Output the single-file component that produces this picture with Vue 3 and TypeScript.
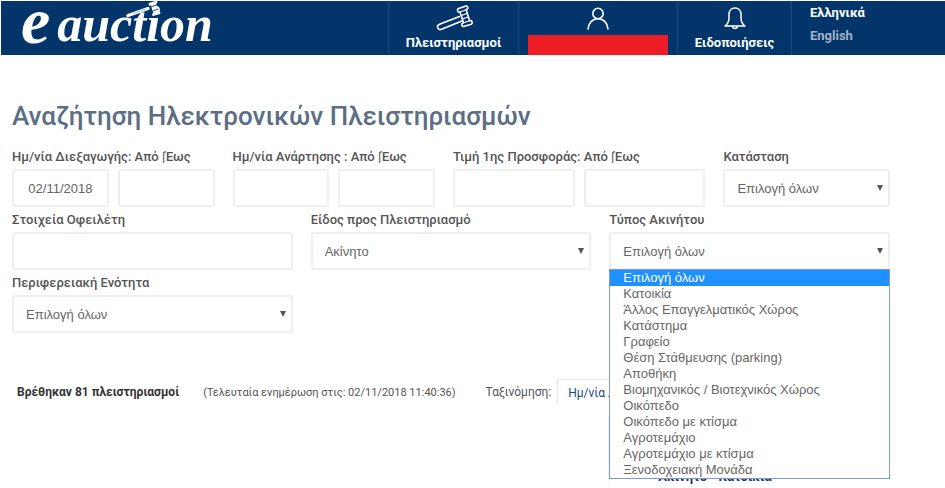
<script setup lang="ts">
import { ref } from 'vue'

const propertyTypes: string[] = [
  'Επιλογή όλων',
  'Κατοικία',
  'Άλλος Επαγγελματικός Χώρος',
  'Κατάστημα',
  'Γραφείο',
  'Θέση Στάθμευσης (parking)',
  'Αποθήκη',
  'Βιομηχανικός / Βιοτεχνικός Χώρος',
  'Οικόπεδο',
  'Οικόπεδο με κτίσμα',
  'Αγροτεμάχιο',
  'Αγροτεμάχιο με κτίσμα',
  'Ξενοδοχειακή Μονάδα',
]

const propertyType = ref<string>(propertyTypes[0])
const menuOpen = ref<boolean>(true)
const conductedFrom = ref<string>('02/11/2018')

function choose(option: string): void {
  propertyType.value = option
  menuOpen.value = false
}
</script>

<template>
  <div class="page">
    <header class="topbar">
      <a class="logo" href="#" aria-label="e auction">
        <span class="logo-e">e</span><span class="logo-name">auction</span>
        <svg class="logo-gavel" viewBox="0 0 36 18" aria-hidden="true">
          <path d="M3 14.500 23 7.500" stroke="#fff" stroke-width="3.4" stroke-linecap="round" />
          <path d="M8 12.600 21 8" stroke="#8fa6c4" stroke-width="0.8" />
          <path d="M25 3.200 31 1.200M28.500 13.500 34 11.800" stroke="#fff" stroke-width="2.800" stroke-linecap="round" />
          <path d="M28 2.500 31.500 12.500" stroke="#fff" stroke-width="5.500" />
          <path d="M25.500 6 31.500 4M27 10.200 33.500 8" stroke="#03356a" stroke-width="0.9" />
        </svg>
      </a>
      <nav class="menu">
        <a class="menu-item auctions" href="#">
          <svg width="40" height="26" viewBox="0 0 40 26" aria-hidden="true">
            <g fill="none" stroke="#fff" stroke-width="1.6" stroke-linejoin="round" stroke-linecap="round">
              <path d="M25.5 11.5 5.5 19.2c-3.6 1.6-1.8 6.4 2 5.1L28 16" />
              <path d="M24.6 3.4 32 1c1.600-.4 2.600 2.400 1 3.200l-.8.5 3.400 11 .9-.1c1.800 0 2.400 3 .7 3.700L29.700 21.500c-1.900.4-2.700-2.600-1-3.300l.8-.4L26 7l-1 .1c-1.800 0-2.200-3-.4-3.700Z" />
              <path d="m26 7 6.200-2.300M29.500 17.800l6.100-2.100M27.500 10.500l5.500-2M28.500 14l5.500-2" stroke-width="1.1" />
            </g>
          </svg>
          <span>Πλειστηριασμοί</span>
        </a>
        <a class="menu-item account" href="#" aria-label="Λογαριασμός">
          <svg width="24" height="24" viewBox="0 0 24 24" aria-hidden="true">
            <g fill="none" stroke="#fff" stroke-width="1.6" stroke-linecap="round">
              <circle cx="12" cy="6.500" r="5.200" />
              <path d="M2 22c.4-6 4.500-10.200 10-10.200s9.600 4.200 10 10.200" />
            </g>
          </svg>
          <span class="user-name"></span>
        </a>
        <a class="menu-item alerts" href="#">
          <svg width="24" height="24" viewBox="0 0 24 24" aria-hidden="true">
            <g fill="none" stroke="#fff" stroke-width="1.500" stroke-linejoin="round" stroke-linecap="round">
              <path d="M2 19h20c-3.200-2.400-4-4-4-8V7.500C18 3.500 15.500 1 12 1S6 3.500 6 7.500V11c0 4-.8 5.600-4 8Z" />
              <path d="M9.500 19.500c.6 2.700 4.400 2.700 5 0" />
            </g>
          </svg>
          <span>Ειδοποιήσεις</span>
        </a>
        <div class="languages">
          <a href="#" lang="el">Ελληνικά</a>
          <a class="inactive" href="#" lang="en">English</a>
        </div>
      </nav>
    </header>

    <main class="content">
      <h1>Αναζήτηση Ηλεκτρονικών Πλειστηριασμών</h1>

      <form class="search" @submit.prevent>
        <div class="row row-ranges">
          <div class="field">
            <label for="conducted-from">Ημ/νία Διεξαγωγής: Από |Έως</label>
            <div class="pair">
              <input id="conducted-from" v-model="conductedFrom" class="control date" type="text" />
              <input class="control date" type="text" aria-label="Ημ/νία Διεξαγωγής: Έως" />
            </div>
          </div>
          <div class="field">
            <label for="posted-from">Ημ/νία Ανάρτησης : Από |Έως</label>
            <div class="pair">
              <input id="posted-from" class="control date" type="text" />
              <input class="control date" type="text" aria-label="Ημ/νία Ανάρτησης: Έως" />
            </div>
          </div>
          <div class="field">
            <label for="price-from">Τιμή 1ης Προσφοράς: Από |Έως</label>
            <div class="pair">
              <input id="price-from" class="control" type="text" />
              <input class="control" type="text" aria-label="Τιμή 1ης Προσφοράς: Έως" />
            </div>
          </div>
          <div class="field">
            <label for="status">Κατάσταση</label>
            <div class="select">
              <select id="status" class="control"><option>Επιλογή όλων</option></select>
            </div>
          </div>
        </div>

        <div class="row">
          <div class="field">
            <label for="debtor">Στοιχεία Οφειλέτη</label>
            <input id="debtor" class="control" type="text" />
          </div>
          <div class="field">
            <label for="kind">Είδος προς Πλειστηριασμό</label>
            <div class="select">
              <select id="kind" class="control"><option>Ακίνητο</option></select>
            </div>
          </div>
          <div class="field">
            <label for="property-type">Τύπος Ακινήτου</label>
            <div class="select">
              <select
                id="property-type"
                v-model="propertyType"
                class="control"
                @mousedown.prevent="menuOpen = !menuOpen"
              >
                <option v-for="option in propertyTypes" :key="option">{{ option }}</option>
              </select>
              <ul v-if="menuOpen" class="options" role="listbox" aria-label="Τύπος Ακινήτου">
                <li
                  v-for="option in propertyTypes"
                  :key="option"
                  role="option"
                  :aria-selected="option === propertyType"
                  :class="{ selected: option === propertyType }"
                  @click="choose(option)"
                >{{ option }}</li>
              </ul>
            </div>
          </div>
        </div>

        <div class="row">
          <div class="field">
            <label for="region">Περιφερειακή Ενότητα</label>
            <div class="select">
              <select id="region" class="control"><option>Επιλογή όλων</option></select>
            </div>
          </div>
        </div>
      </form>

      <section class="results">
        <strong>Βρέθηκαν 81 πλειστηριασμοί</strong>
        <span class="updated">(Τελευταία ενημέρωση στις: 02/11/2018 11:40:36)</span>
        <label class="sort-label" for="sort">Ταξινόμηση:</label>
        <select id="sort" class="sort"><option>Ημ/νία Διεξαγωγής</option></select>
      </section>
      <article class="result-card">Ακίνητο - Κατοικία</article>
    </main>
  </div>
</template>

<style>
body {
  background: #fff;
}
</style>

<style scoped>
.page {
  display: flow-root;
  min-height: 100vh;
  font-family: Roboto, "Liberation Sans", sans-serif;
  font-size: 13px;
  color: #555;
}

.page,
.page *,
.page *::before,
.page *::after {
  box-sizing: border-box;
}

.topbar {
  display: flex;
  justify-content: space-between;
  height: 54px;
  margin: 1px 0 0 1px;
  background: #03356a;
}

.topbar a {
  color: #fff;
  text-decoration: none;
}

.logo {
  position: relative;
  display: flex;
  align-items: flex-start;
  gap: 7px;
  padding-left: 20px;
  font-family: "Liberation Serif", serif;
  font-style: italic;
  font-weight: bold;
}

.logo-e {
  font-size: 66px;
  line-height: 40px;
}

.logo-name {
  font-size: 50px;
  line-height: 46px;
}

.logo-gavel {
  position: absolute;
  top: 0;
  left: 124px;
  width: 36px;
  height: 18px;
  fill: none;
}

.menu {
  display: flex;
  font-weight: bold;
}

.menu-item {
  display: flex;
  flex-direction: column;
  align-items: center;
  justify-content: space-between;
  padding-top: 6px;
  border-left: 1px solid #1d4a7c;
}

.menu-item span {
  line-height: 24px;
}

.auctions {
  width: 130px;
  padding-top: 4px;
}

.account {
  width: 159px;
}

.alerts {
  width: 114px;
}

.menu-item .user-name {
  width: 140px;
  height: 20px;
  background: #ee1c25;
}

.languages {
  display: flex;
  flex-direction: column;
  width: 154px;
  padding-left: 18px;
  border-left: 1px solid #1d4a7c;
  line-height: 23px;
}

.languages .inactive {
  color: #a3b1c6;
}

.content {
  padding: 45px 55px 0 12px;
}

h1 {
  margin: 0 0 15px;
  font-size: 26px;
  line-height: 32px;
  font-weight: 500;
  color: #5b6e84;
}

.search {
  display: grid;
  gap: 3px;
}

.row {
  display: grid;
  grid-template-columns: repeat(3, 1fr);
  gap: 18px;
}

.row-ranges {
  grid-template-columns: 203fr 203fr 253fr 167fr;
}

.field {
  display: flex;
  flex-direction: column;
  min-width: 0;
}

.field label {
  padding-bottom: 2px;
  font-weight: 500;
  line-height: 20px;
  white-space: nowrap;
}

.pair {
  display: grid;
  grid-template-columns: 1fr 1fr;
  gap: 9px;
}

.control {
  width: 100%;
  height: 38px;
  padding: 0 12px;
  border: 2px solid #efefef;
  border-radius: 3px;
  background: #fff;
  color: #666;
  font-family: "Liberation Sans", sans-serif;
  font-size: 13px;
  appearance: none;
}

.date {
  text-align: center;
}

.select {
  position: relative;
}

.select::after {
  content: "";
  position: absolute;
  top: 16px;
  right: 7px;
  border: 3px solid transparent;
  border-top: 6px solid #555;
  border-bottom: 0;
  pointer-events: none;
}

.options {
  position: absolute;
  z-index: 1;
  top: 37px;
  left: 0;
  right: 0;
  margin: 0;
  padding: 0;
  list-style: none;
  border: 1px solid #7a9cc6;
  background: #fff;
  color: #666;
  font-family: "Liberation Sans", sans-serif;
  line-height: 16px;
}

.options li {
  padding-left: 13px;
}

.options .selected {
  background: #1e90ff;
  color: #fff;
}

.results {
  display: flex;
  align-items: center;
  padding: 46px 0 0 5px;
  font-size: 12px;
  white-space: nowrap;
}

.results strong {
  color: #333;
}

.updated {
  margin-left: 24px;
  font-size: 11px;
}

.sort-label {
  margin-left: 30px;
}

.sort {
  height: 26px;
  margin-left: 6px;
  padding: 0 10px;
  border: 1px solid #e6e6ea;
  border-bottom: 0;
  background: #fff;
  color: #1c4a7c;
  font: inherit;
  appearance: none;
}

.result-card {
  margin: 10px 0 0 calc(200% / 3 + 11px);
  padding: 54px 0 0 49px;
  border-left: 1px solid #f3f3f3;
  color: #23395d;
  font-weight: bold;
  line-height: 16px;
  white-space: nowrap;
}
</style>
